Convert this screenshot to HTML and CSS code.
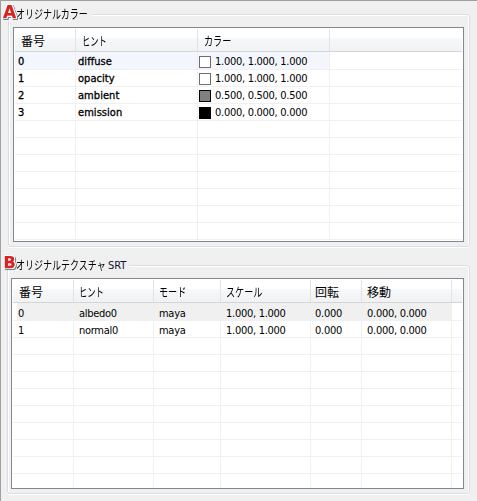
FILE: index.html
```html
<!DOCTYPE html>
<html lang="ja">
<head>
<meta charset="utf-8">
<title>オリジナルカラー</title>
<link rel="stylesheet" href="styles.css">
</head>
<body>
<section class="group group-color">
  <h2 class="legend"><span class="kana">オリジナルカラー</span></h2>
  <b class="badge badge-a">A</b>
  <div class="table colors">
    <div class="row head"><div>番号</div><div><span class="kana narrow">ヒント</span></div><div><span class="kana">カラー</span></div><div></div></div>
    <div class="row selected strong"><div>0</div><div>diffuse</div><div><i class="swatch"></i>1.000, 1.000, 1.000</div><div></div></div>
    <div class="row strong"><div>1</div><div>opacity</div><div><i class="swatch"></i>1.000, 1.000, 1.000</div><div></div></div>
    <div class="row strong"><div>2</div><div>ambient</div><div><i class="swatch gray"></i>0.500, 0.500, 0.500</div><div></div></div>
    <div class="row strong"><div>3</div><div>emission</div><div><i class="swatch black"></i>0.000, 0.000, 0.000</div><div></div></div>
    <div class="row"><div></div><div></div><div></div><div></div></div>
    <div class="row"><div></div><div></div><div></div><div></div></div>
    <div class="row"><div></div><div></div><div></div><div></div></div>
    <div class="row"><div></div><div></div><div></div><div></div></div>
    <div class="row"><div></div><div></div><div></div><div></div></div>
    <div class="row"><div></div><div></div><div></div><div></div></div>
    <div class="row"><div></div><div></div><div></div><div></div></div>
  </div>
</section>
<section class="group group-srt">
  <h2 class="legend"><span class="kana">オリジナルテクスチャ</span><span class="latin">SRT</span></h2>
  <b class="badge badge-b">B</b>
  <div class="table textures">
    <div class="row head"><div>番号</div><div><span class="kana narrow">ヒント</span></div><div><span class="kana">モード</span></div><div><span class="kana">スケール</span></div><div>回転</div><div>移動</div><div></div></div>
    <div class="row selected"><div>0</div><div>albedo0</div><div>maya</div><div>1.000, 1.000</div><div>0.000</div><div>0.000, 0.000</div><div></div></div>
    <div class="row"><div>1</div><div>normal0</div><div>maya</div><div>1.000, 1.000</div><div>0.000</div><div>0.000, 0.000</div><div></div></div>
    <div class="row"><div></div><div></div><div></div><div></div><div></div><div></div><div></div></div>
    <div class="row"><div></div><div></div><div></div><div></div><div></div><div></div><div></div></div>
    <div class="row"><div></div><div></div><div></div><div></div><div></div><div></div><div></div></div>
    <div class="row"><div></div><div></div><div></div><div></div><div></div><div></div><div></div></div>
    <div class="row"><div></div><div></div><div></div><div></div><div></div><div></div><div></div></div>
    <div class="row"><div></div><div></div><div></div><div></div><div></div><div></div><div></div></div>
    <div class="row"><div></div><div></div><div></div><div></div><div></div><div></div><div></div></div>
    <div class="row"><div></div><div></div><div></div><div></div><div></div><div></div><div></div></div>
    <div class="row stub"><div></div><div></div><div></div><div></div><div></div><div></div><div></div></div>
  </div>
</section>
</body>
</html>
```

FILE: styles.css
```css
* { box-sizing: border-box; }
body {
  margin: 0;
  width: 477px;
  height: 501px;
  overflow: hidden;
  background: #f0f0f0;
  border: solid #a0a0a0;
  border-width: 1px 0 0 1px;
  padding: 13px 7px 0 7px;
  font: 11px/16px "DejaVu Sans Condensed", "Noto Sans CJK JP", sans-serif;
  color: #000;
}
.group {
  position: relative;
  width: 462px;
  border: 1px solid #d5dfe5;
  border-radius: 3px;
  box-shadow: inset 1px 1px 0 #fff, inset -1px 0 0 #fff, 0 1px 0 #fff;
}
.group-color { height: 233px; padding: 12px 0 0 4px; }
.group-srt { height: 229px; margin-top: 18px; padding: 12px 0 0 3px; margin-left: -1px; width: 463px; }
.legend {
  position: absolute;
  left: 7px;
  top: -9px;
  height: 18px;
  width: 76px;
  margin: 0;
  background: #f0f0f0;
  font-size: 11px;
  font-weight: normal;
  line-height: 18px;
  white-space: nowrap;
}
.group-srt .legend { left: 8px; width: 113px; }
.kana {
  display: inline-block;
  font: 12px/16px "Noto Sans CJK JP", sans-serif;
  transform: scaleX(.76);
  transform-origin: 0 50%;
}
.legend .kana { transform: scaleX(.75); }
.narrow { transform: scaleX(.69); }
.latin { position: absolute; left: 92px; top: 0; letter-spacing: -.1px; color: #101030; }
.badge {
  position: absolute;
  left: -6px;
  top: -12px;
  width: 13px;
  font: bold 17px/18px "DejaVu Sans", sans-serif;
  color: #d92320;
  text-align: center;
  -webkit-text-stroke: .25px #d92320;
  text-shadow: 1px 0 #fff, -1px 0 #fff, 0 1px #fff, 0 -1px #fff, 1px 1px #fff, -1px -1px #fff, 1px -1px #fff, -1px 1px #fff;
  filter: drop-shadow(1px 1px .3px #6d8797);
}
.badge-b { left: -5px; font-size: 16px; }
.table {
  border: 1px solid #828790;
  background: #fff;
  padding: 1px;
  overflow: hidden;
}
.colors { width: 451px; height: 215px; }
.textures { width: 453px; height: 211px; }
.row {
  display: grid;
  height: 17px;
  border-bottom: 1px solid #f0f0f0;
  white-space: nowrap;
  letter-spacing: -.28px;
}
.colors .row { grid-template: 100% / 61px 122px 132px 1fr; }
.textures .row { grid-template: 100% / 61px 80px 67px 90px 51px 90px 1fr; }
.row > div {
  display: flex;
  align-items: center;
  padding: 2px 0 0 3px;
  border-right: 1px solid #f0f0f0;
}
.row > div:last-child { border-right: 0; }
.textures .row > div { padding: 4px 0 0 5px; }
.textures .row > div:nth-child(5) { padding-left: 4px; }
.head.row {
  height: 23px;
  border-bottom: 1px solid #d5d5d5;
  background: linear-gradient(#fff 0 9px, #f7f8fa 9px, #f1f2f4 100%);
  font: 12px/16px "Noto Sans CJK JP", sans-serif;
  letter-spacing: 0;
}
.head.row > div { padding: 2px 0 0 6px; border-right-color: #e1e3e5; }
.textures .head.row > div { padding: 2px 0 0 5px; }
.textures .head.row > div:first-child { padding-left: 6px; }
.textures .head.row > div:nth-child(5) { padding-left: 4px; }
.head + .row { height: 18px; }
.colors .selected > div:not(:last-child) { background: #f3f7fd; }
.colors .selected { box-shadow: inset 0 1px 0 #fff; }
.textures .selected > div:not(:last-child) { background: #f0f0f0; }
.textures .selected > div:first-child { box-shadow: inset 4px 0 0 #fff; }
.strong > div:nth-child(-n+2) { -webkit-text-stroke: .3px #000; letter-spacing: .05px; }
.strong > div:nth-child(2) { padding-left: 2px; }
.swatch {
  width: 12px;
  height: 12px;
  margin: 0 4px 0 -2px;
  border: 1px solid #6d6d6d;
  background: #fff;
}
.gray { background: #808080; border-color: #000; }
.black { background: #000; border-color: #000; }
.stub { height: 14px; border-bottom: 0; }
```
